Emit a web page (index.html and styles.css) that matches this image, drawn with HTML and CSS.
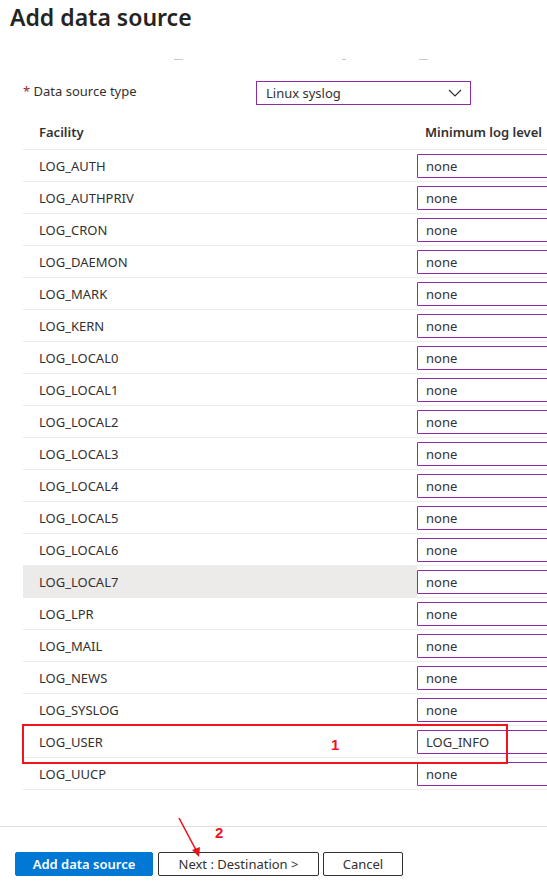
FILE: index.html
```html
<!DOCTYPE html>
<html>
<head>
<meta charset="utf-8">
<link rel="stylesheet" href="styles.css">
</head>
<body>
<div class="page">
  <h1 class="title">Add data source</h1>
  <div class="clipped"><span class="frag f1"></span><span class="frag f2"></span><span class="frag f3"></span></div>
  <div class="form-row">
    <label class="label"><span class="req">*</span> Data source type</label>
    <div class="select">
      <span>Linux syslog</span>
      <svg class="chev" width="14" height="8" viewBox="0 0 14 8"><path d="M1 1 L7 7 L13 1" fill="none" stroke="#323130" stroke-width="1.2"/></svg>
    </div>
  </div>
  <div class="table">
    <div class="row head"><div class="c1">Facility</div><div class="c2 hl">Minimum log level</div></div>
    <div class="row"><div class="c1">LOG_AUTH</div><div class="c2"><div class="box">none</div></div></div>
    <div class="row"><div class="c1">LOG_AUTHPRIV</div><div class="c2"><div class="box">none</div></div></div>
    <div class="row"><div class="c1">LOG_CRON</div><div class="c2"><div class="box">none</div></div></div>
    <div class="row"><div class="c1">LOG_DAEMON</div><div class="c2"><div class="box">none</div></div></div>
    <div class="row"><div class="c1">LOG_MARK</div><div class="c2"><div class="box">none</div></div></div>
    <div class="row"><div class="c1">LOG_KERN</div><div class="c2"><div class="box">none</div></div></div>
    <div class="row"><div class="c1">LOG_LOCAL0</div><div class="c2"><div class="box">none</div></div></div>
    <div class="row"><div class="c1">LOG_LOCAL1</div><div class="c2"><div class="box">none</div></div></div>
    <div class="row"><div class="c1">LOG_LOCAL2</div><div class="c2"><div class="box">none</div></div></div>
    <div class="row"><div class="c1">LOG_LOCAL3</div><div class="c2"><div class="box">none</div></div></div>
    <div class="row"><div class="c1">LOG_LOCAL4</div><div class="c2"><div class="box">none</div></div></div>
    <div class="row"><div class="c1">LOG_LOCAL5</div><div class="c2"><div class="box">none</div></div></div>
    <div class="row"><div class="c1">LOG_LOCAL6</div><div class="c2"><div class="box">none</div></div></div>
    <div class="row hover"><div class="c1">LOG_LOCAL7</div><div class="c2"><div class="box">none</div></div></div>
    <div class="row"><div class="c1">LOG_LPR</div><div class="c2"><div class="box">none</div></div></div>
    <div class="row"><div class="c1">LOG_MAIL</div><div class="c2"><div class="box">none</div></div></div>
    <div class="row"><div class="c1">LOG_NEWS</div><div class="c2"><div class="box">none</div></div></div>
    <div class="row"><div class="c1">LOG_SYSLOG</div><div class="c2"><div class="box">none</div></div></div>
    <div class="row"><div class="c1">LOG_USER</div><div class="c2"><div class="box">LOG_INFO</div></div></div>
    <div class="row"><div class="c1">LOG_UUCP</div><div class="c2"><div class="box">none</div></div></div>
  </div>
  <div class="footer">
    <button class="btn primary">Add data source</button>
    <button class="btn next">Next : Destination &gt;</button>
    <button class="btn cancel">Cancel</button>
  </div>
  <div class="annot-box"></div>
  <div class="annot-num n1">1</div>
  <div class="annot-num n2">2</div>
  <svg class="arrow" width="40" height="50" viewBox="0 0 40 50">
    <path d="M1 1 L19 35" stroke="#e8141c" stroke-width="1.6" fill="none"/>
    <path d="M14 33 L21 40 L22 30 Z" fill="#e8141c"/>
  </svg>
</div>
</body>
</html>
```
FILE: styles.css
```css
html, body {
  margin: 0;
  padding: 0;
  background: #fff;
  overflow: hidden;
}
body {
  font-family: "Noto Sans", "Open Sans", sans-serif;
  color: #323130;
  font-size: 13px;
}
.page {
  position: relative;
  width: 547px;
  height: 891px;
}
.title {
  margin: 0;
  padding: 2px 0 0 10px;
  height: 34px;
  font-size: 23px;
  font-weight: 600;
  line-height: 30px;
  color: #252423;
}
.clipped {
  height: 26px;
  display: flex;
  align-items: flex-start;
  padding-top: 23px;
  box-sizing: border-box;
}
.frag {
  display: block;
  height: 1px;
  background: #b0a48c;
  opacity: 0.6;
}
.f1 { margin-left: 174px; width: 9px; }
.f2 { margin-left: 159px; width: 4px; }
.f3 { margin-left: 73px; width: 9px; }
.form-row {
  display: flex;
  align-items: flex-start;
  padding-left: 23px;
  height: 34px;
  margin-top: 19px;
}
.label {
  width: 233px;
  font-size: 13px;
  line-height: 18px;
  padding-top: 1px;
}
.req {
  color: #a4262c;
}
.select {
  height: 22px;
  border: 1px solid #8a2da5;
  display: flex;
  align-items: center;
  justify-content: space-between;
  padding: 0 8px 0 9px;
  box-sizing: content-box;
  width: 196px;
}
.chev {
  display: block;
}
.table {
  margin-left: 23px;
  margin-top: 0;
  width: 560px;
}
.row {
  display: flex;
  height: 31px;
  border-bottom: 1px solid #edebe9;
  align-items: center;
}
.row.head {
  height: 34px;
  font-weight: 600;
}
.row.hover .c1 {
  background: #edebe9;
}
.c1 {
  width: 378px;
  padding-left: 16px;
  height: 100%;
  display: flex;
  align-items: center;
}
.c2 {
  flex: 1;
  height: 100%;
  display: flex;
  align-items: center;
}
.c2.hl {
  padding-left: 8px;
}
.box {
  width: 150px;
  height: 22px;
  border: 1px solid #8a2da5;
  padding-left: 8px;
  display: flex;
  align-items: center;
  border-radius: 1px;
}
.footer {
  margin-top: 36px;
  border-top: 1px solid #e1dfdd;
  padding: 25px 0 0 15px;
  display: flex;
  gap: 4px;
}
.btn {
  font-family: inherit;
  font-size: 13px;
  height: 24px;
  padding: 0;
  border-radius: 2px;
  background: #fff;
  border: 1px solid #323130;
  color: #323130;
  line-height: 20px;
}
.btn.primary {
  width: 138px;
  background: #0078d4;
  border-color: #0078d4;
  color: #fff;
  font-weight: 600;
  margin-right: 1px;
}
.btn.next {
  width: 161px;
}
.btn.cancel {
  width: 80px;
}
.annot-box {
  position: absolute;
  left: 22px;
  top: 724px;
  width: 482px;
  height: 36px;
  border: 2px solid #f0141e;
}
.annot-num {
  position: absolute;
  color: #f0141e;
  font-weight: 700;
  font-size: 15px;
  font-family: "Liberation Sans", Arial, sans-serif;
  line-height: 16px;
}
.n1 {
  left: 331px;
  top: 737px;
}
.n2 {
  left: 215px;
  top: 825px;
}
.arrow {
  position: absolute;
  left: 178px;
  top: 817px;
}
```
